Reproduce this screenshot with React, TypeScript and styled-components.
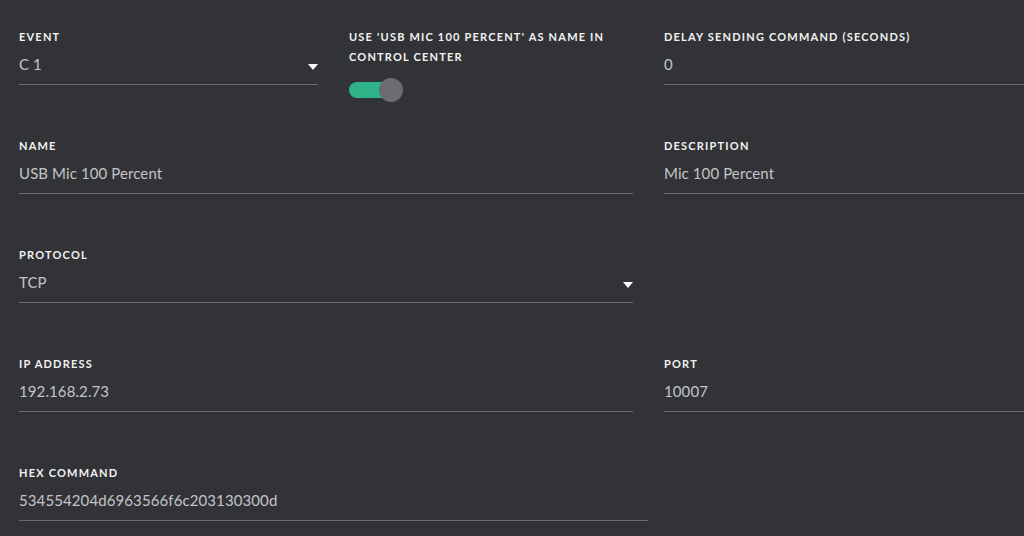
import React from 'react'
import styled, { createGlobalStyle } from 'styled-components'

const GlobalStyle = createGlobalStyle`
	html, body {
		margin: 0;
		padding: 0;
		background: #323337;
		overflow: hidden;
	}
	body {
		font-family: Lato, "Open Sans", sans-serif;
	}
`

const Page = styled.div`
	width: 1024px;
	height: 536px;
	overflow: hidden;
	box-sizing: border-box;
	padding: 27px 0 0 19px;
	background: #323337;
	display: grid;
	grid-template-columns: 299px 284px 614px;
	grid-auto-rows: 58px;
	column-gap: 31px;
	row-gap: 51px;
`

const Field = styled.div<{ $span?: number; $width?: number }>`
	grid-column: span ${(p) => p.$span || 1};
	${(p) => (p.$width ? `width: ${p.$width}px;` : '')}
	display: flex;
	flex-direction: column;
	min-width: 0;
`

const Label = styled.div`
	font-size: 11px;
	font-weight: 700;
	line-height: 20px;
	letter-spacing: 1.2px;
	text-transform: uppercase;
	color: #f2f2f2;
`

const ValueRow = styled.div`
	margin-top: 5px;
	padding-bottom: 8px;
	border-bottom: 1px solid #6b6b6f;
	display: flex;
	align-items: center;
	justify-content: space-between;
`

const Value = styled.div`
	font-size: 15px;
	line-height: 24px;
	letter-spacing: 0.1px;
	color: #c4c4c8;
	white-space: nowrap;
`

const Caret = styled.span`
	width: 0;
	height: 0;
	margin: 6px 0 0 0;
	border-left: 5px solid transparent;
	border-right: 5px solid transparent;
	border-top: 6px solid #ffffff;
`

const Toggle = styled.div<{ $on: boolean }>`
	position: relative;
	margin-top: 11px;
	width: 56px;
	height: 24px;
	&::before {
		content: '';
		position: absolute;
		left: 0;
		top: 4px;
		width: 44px;
		height: 16px;
		border-radius: 8px;
		background: ${(p) => (p.$on ? '#2eb388' : '#555')};
	}
	&::after {
		content: '';
		position: absolute;
		left: 30px;
		top: 0;
		width: 24px;
		height: 24px;
		border-radius: 50%;
		background: #6d6d71;
	}
`

interface InputProps {
	label: string
	value: string
	select?: boolean
	span?: number
	width?: number
}

const Input = ({ label, value, select, span, width }: InputProps) => (
	<Field $span={span} $width={width}>
		<Label>{label}</Label>
		<ValueRow>
			<Value>{value}</Value>
			{select && <Caret />}
		</ValueRow>
	</Field>
)

const Empty = styled.div``

const App = () => {
	return (
		<>
			<GlobalStyle />
			<Page>
				<Input label="Event" value="C 1" select />
				<Field>
					<Label>Use 'USB Mic 100 Percent' as name in Control Center</Label>
					<Toggle $on />
				</Field>
				<Input label="Delay sending command (seconds)" value="0" />

				<Input label="Name" value="USB Mic 100 Percent" span={2} />
				<Input label="Description" value="Mic 100 Percent" />

				<Input label="Protocol" value="TCP" select span={2} />
				<Empty />

				<Input label="IP Address" value="192.168.2.73" span={2} />
				<Input label="Port" value="10007" />

				<Input label="Hex command" value="534554204d6963566f6c203130300d" span={2} width={629} />
			</Page>
		</>
	)
}

export default App
